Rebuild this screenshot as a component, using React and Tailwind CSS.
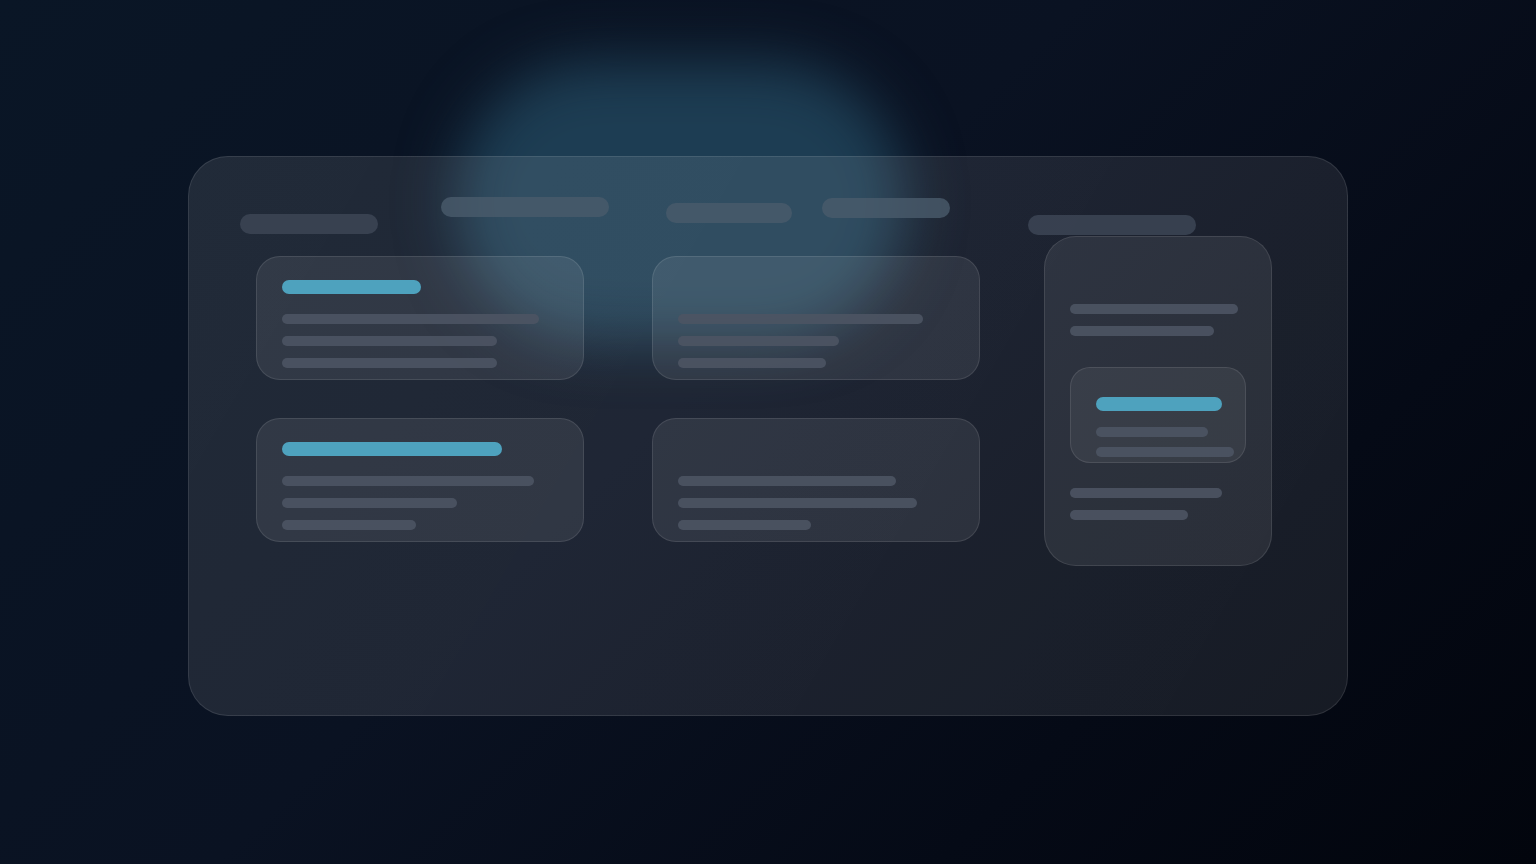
/**
 * Skeleton dashboard — glass panel with placeholder cards
 */
import React from 'react';

function Bar({ w, tone = 'line', className = '' }) {
  const tones = {
    line: 'h-[10px] bg-[#4c5463]/90',
    accent: 'h-[14px] bg-[#4ea2be]',
    pill: 'h-[20px] bg-[#3b4453]/90',
  };
  return <div className={`rounded-full ${tones[tone]} ${className}`} style={{ width: w }} />;
}

function Card({ accent, lines, className = '' }) {
  return (
    <div
      className={`w-[328px] h-[124px] rounded-[24px] border border-white/10 bg-white/[0.08] px-[25px] ${className}`}
    >
      {accent ? (
        <div className="pt-[23px] pb-[20px]">
          <Bar w={accent} tone="accent" />
        </div>
      ) : (
        <div className="h-[57px]" />
      )}
      <div className="flex flex-col gap-[12px]">
        {lines.map((w, i) => (
          <Bar key={i} w={w} />
        ))}
      </div>
    </div>
  );
}

export default function App() {
  return (
    <div className="relative min-h-screen w-full overflow-hidden bg-[linear-gradient(135deg,#0a1626_0%,#0a1222_45%,#050a16_75%,#02050d_100%)]">
      {/* soft blue glow behind the panel */}
      <div className="pointer-events-none absolute left-[455px] top-[62px] h-[280px] w-[450px] rounded-full bg-[#1d3d53] blur-[28px]" />

      <div className="relative pt-[156px]">
        <div className="mx-auto h-[560px] w-[1160px] rounded-[40px] border border-white/10 bg-[linear-gradient(120deg,rgba(255,255,255,0.095)_0%,rgba(255,255,255,0.085)_50%,rgba(255,255,255,0.08)_100%)]">
          {/* header pills */}
          <div className="flex items-start pt-[40px]">
            <Bar w={138} tone="pill" className="ml-[51px] mt-[17px]" />
            <Bar w={168} tone="pill" className="ml-[63px] bg-[#4a5b6c]/80" />
            <Bar w={126} tone="pill" className="ml-[57px] mt-[6px] bg-[#4a5b6c]/80" />
            <Bar w={128} tone="pill" className="ml-[30px] mt-[1px] bg-[#4a5b6c]/80" />
            <Bar w={168} tone="pill" className="ml-[78px] mt-[18px]" />
          </div>

          {/* body */}
          <div className="flex items-start pl-[67px]">
            <div className="mt-[21px] flex flex-col gap-[38px]">
              <Card accent={139} lines={[257, 215, 215]} />
              <Card accent={220} lines={[252, 175, 134]} />
            </div>
            <div className="ml-[68px] mt-[21px] flex flex-col gap-[38px]">
              <Card lines={[245, 161, 148]} />
              <Card lines={[218, 239, 133]} />
            </div>

            <div className="ml-[64px] mt-[1px] h-[330px] w-[228px] rounded-[32px] border border-white/10 bg-white/[0.08] px-[25px] pt-[67px]">
              <div className="flex flex-col gap-[12px]">
                <Bar w={168} />
                <Bar w={144} />
              </div>
              <div className="mt-[31px] h-[96px] w-[176px] rounded-[20px] border border-white/10 bg-white/[0.06] px-[25px] pt-[29px]">
                <Bar w={126} tone="accent" />
                <div className="mt-[16px] flex flex-col gap-[10px]">
                  <Bar w={112} />
                  <Bar w={138} />
                </div>
              </div>
              <div className="mt-[25px] flex flex-col gap-[12px]">
                <Bar w={152} />
                <Bar w={118} />
              </div>
            </div>
          </div>
        </div>
      </div>
    </div>
  );
}
